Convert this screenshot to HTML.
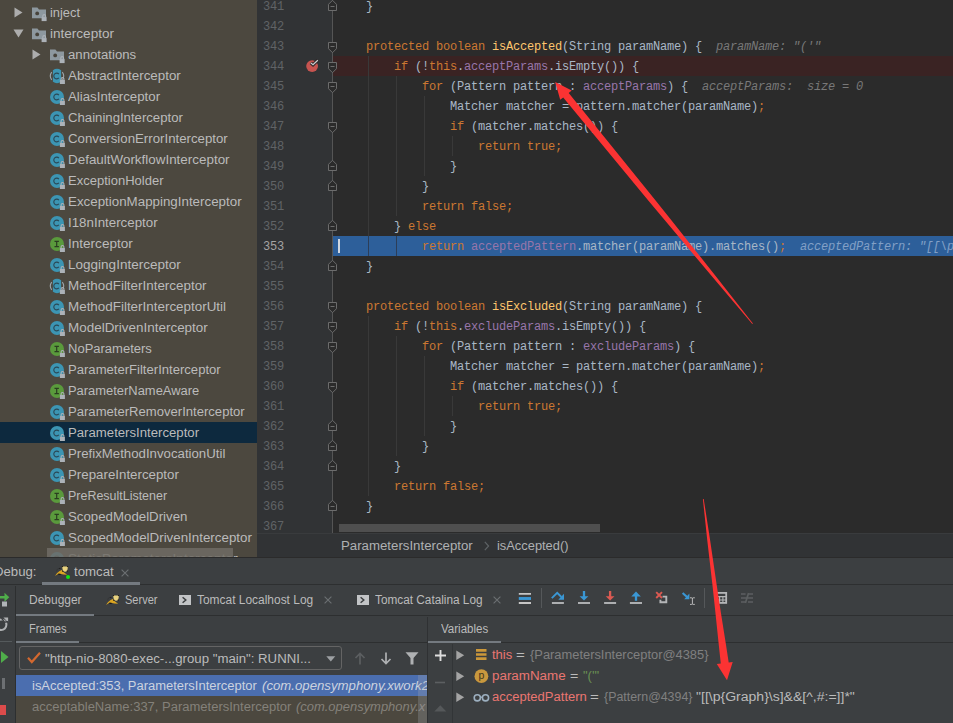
<!DOCTYPE html>
<html><head><meta charset="utf-8"><title>debug</title>
<style>
*{box-sizing:border-box}
html,body{margin:0;padding:0;background:#3c3f41;overflow:hidden}
body{width:953px;height:723px;position:relative;font-family:"Liberation Sans",sans-serif;font-size:12.5px;color:#bbbbbb}
.abs{position:absolute}
.t{position:absolute;white-space:pre;line-height:20px;height:20px;transform-origin:0 0}
#tree{position:absolute;left:0;top:0;width:257px;height:557px;background:#4c483f;overflow:hidden}
#tree .row{position:absolute;left:0;width:257px;height:21px}
#tree .sel{background:#0d293e}
#editor{position:absolute;left:257px;top:0;width:696px;height:533px;background:#2b2b2b;overflow:hidden}
#gutter{position:absolute;left:0;top:0;width:76px;height:533px;background:#313335}
.ln{position:absolute;left:6px;width:22px;font-family:"Liberation Mono",monospace;font-size:12px;letter-spacing:-0.2px;color:#606366;line-height:20px;height:20px;white-space:pre}
.code{position:absolute;left:81px;font-family:"Liberation Mono",monospace;font-size:12px;letter-spacing:-0.2012px;color:#a9b7c6;line-height:20px;height:20px;white-space:pre}
.k{color:#cc7832}.f{color:#9876aa}.m{color:#ffc66d}.h{color:#787878;font-style:italic}.h2{color:#82a0c6}
.lbg{position:absolute;left:76px;width:620px;height:20px}
#crumbs{position:absolute;left:257px;top:533px;width:696px;height:24px;background:#313335}
#debug{position:absolute;left:0;top:557px;width:953px;height:166px;background:#3c3f41;overflow:hidden}
.hl{position:absolute;background:#2d2f30;height:1px}
.vl{position:absolute;background:#2d2f30;width:1px}
.ul{position:absolute;background:#747a80;height:3px;z-index:2}
</style></head>
<body>
<div id="tree">
<div class="row" style="top:2px"></div>
<svg class="abs" style="left:14px;top:7px" width="10" height="11" viewBox="0 0 10 11"><path d="M0.5 0.5L8.5 5.5L0.5 10.5z" fill="#adadad"/></svg>
<svg class="abs" style="left:31px;top:3.7px" width="18" height="20" viewBox="0 0 18 20">
<path d="M1 3.5h5.4l1.6 2H15v8.7H1z" fill="#8d989f"/>
<circle cx="6.2" cy="9.4" r="1.9" fill="#47433b"/><rect x="10.6" y="13.100000000000001" width="5" height="4" fill="#acb2b8"/><path d="M11.799999999999999 13.2v-1.2a1.4 1.4 0 0 1 2.8 0v1.2" stroke="#acb2b8" stroke-width="1.1" fill="none"/></svg>
<span class="t" style="left:50.00px;top:2.50px;transform:scaleX(1.0293);">inject</span>
<div class="row" style="top:23px"></div>
<svg class="abs" style="left:13px;top:29px" width="12" height="10" viewBox="0 0 12 10"><path d="M0.5 0.5h10L5.5 8.5z" fill="#adadad"/></svg>
<svg class="abs" style="left:31px;top:24.7px" width="18" height="20" viewBox="0 0 18 20">
<path d="M1 3.5h5.4l1.6 2H15v8.7H1z" fill="#8d989f"/>
<circle cx="6.2" cy="9.4" r="1.9" fill="#47433b"/><rect x="10.6" y="13.100000000000001" width="5" height="4" fill="#acb2b8"/><path d="M11.799999999999999 13.2v-1.2a1.4 1.4 0 0 1 2.8 0v1.2" stroke="#acb2b8" stroke-width="1.1" fill="none"/></svg>
<span class="t" style="left:50.00px;top:23.50px;transform:scaleX(1.0833);">interceptor</span>
<div class="row" style="top:44px"></div>
<svg class="abs" style="left:32px;top:49px" width="10" height="11" viewBox="0 0 10 11"><path d="M0.5 0.5L8.5 5.5L0.5 10.5z" fill="#adadad"/></svg>
<svg class="abs" style="left:49px;top:45.7px" width="18" height="20" viewBox="0 0 18 20">
<path d="M1 3.5h5.4l1.6 2H15v8.7H1z" fill="#8d989f"/>
<circle cx="6.2" cy="9.4" r="1.9" fill="#47433b"/><rect x="10.6" y="13.100000000000001" width="5" height="4" fill="#acb2b8"/><path d="M11.799999999999999 13.2v-1.2a1.4 1.4 0 0 1 2.8 0v1.2" stroke="#acb2b8" stroke-width="1.1" fill="none"/></svg>
<span class="t" style="left:68.00px;top:44.50px;transform:scaleX(1.0545);">annotations</span>
<div class="row" style="top:65px"></div>
<svg class="abs" style="left:47px;top:65px" width="20" height="21" viewBox="-3 0 20 21"><path d="M2.9000000000000004 5.33A7 7 0 0 1 11.1 5.33L11.1 16.67A7 7 0 0 1 2.9000000000000004 16.67Z" fill="#3c95b3"/><path d="M1.7000000000000002 7.1A6.6 6.6 0 0 0 1.7000000000000002 14.9M12.3 7.1A6.6 6.6 0 0 1 12.3 14.9" stroke="#9aa4ab" stroke-width="1.1" fill="none"/><path d="M8.899999999999999 9.1A2.9 2.9 0 1 0 8.899999999999999 12.9" stroke="#2a4856" stroke-width="1.15" fill="none"/><rect x="9.9" y="15.0" width="5" height="4" fill="#acb2b8"/><path d="M11.1 15.100000000000001v-1.2a1.4 1.4 0 0 1 2.8 0v1.2" stroke="#acb2b8" stroke-width="1.1" fill="none"/></svg>
<span class="t" style="left:68.00px;top:65.50px;transform:scaleX(1.0679);">AbstractInterceptor</span>
<div class="row" style="top:86px"></div>
<svg class="abs" style="left:47px;top:86px" width="20" height="21" viewBox="-3 0 20 21"><circle cx="7.0" cy="11.0" r="7" fill="#3c95b3"/><path d="M8.899999999999999 9.1A2.9 2.9 0 1 0 8.899999999999999 12.9" stroke="#2a4856" stroke-width="1.15" fill="none"/><rect x="9.9" y="15.0" width="5" height="4" fill="#acb2b8"/><path d="M11.1 15.100000000000001v-1.2a1.4 1.4 0 0 1 2.8 0v1.2" stroke="#acb2b8" stroke-width="1.1" fill="none"/></svg>
<span class="t" style="left:68.00px;top:86.50px;transform:scaleX(1.0602);">AliasInterceptor</span>
<div class="row" style="top:107px"></div>
<svg class="abs" style="left:47px;top:107px" width="20" height="21" viewBox="-3 0 20 21"><circle cx="7.0" cy="11.0" r="7" fill="#3c95b3"/><path d="M8.899999999999999 9.1A2.9 2.9 0 1 0 8.899999999999999 12.9" stroke="#2a4856" stroke-width="1.15" fill="none"/><rect x="9.9" y="15.0" width="5" height="4" fill="#acb2b8"/><path d="M11.1 15.100000000000001v-1.2a1.4 1.4 0 0 1 2.8 0v1.2" stroke="#acb2b8" stroke-width="1.1" fill="none"/></svg>
<span class="t" style="left:68.00px;top:107.50px;transform:scaleX(1.0530);">ChainingInterceptor</span>
<div class="row" style="top:128px"></div>
<svg class="abs" style="left:47px;top:128px" width="20" height="21" viewBox="-3 0 20 21"><circle cx="7.0" cy="11.0" r="7" fill="#3c95b3"/><path d="M8.899999999999999 9.1A2.9 2.9 0 1 0 8.899999999999999 12.9" stroke="#2a4856" stroke-width="1.15" fill="none"/><rect x="9.9" y="15.0" width="5" height="4" fill="#acb2b8"/><path d="M11.1 15.100000000000001v-1.2a1.4 1.4 0 0 1 2.8 0v1.2" stroke="#acb2b8" stroke-width="1.1" fill="none"/></svg>
<span class="t" style="left:68.00px;top:128.50px;transform:scaleX(1.0598);">ConversionErrorInterceptor</span>
<div class="row" style="top:149px"></div>
<svg class="abs" style="left:47px;top:149px" width="20" height="21" viewBox="-3 0 20 21"><circle cx="7.0" cy="11.0" r="7" fill="#3c95b3"/><path d="M8.899999999999999 9.1A2.9 2.9 0 1 0 8.899999999999999 12.9" stroke="#2a4856" stroke-width="1.15" fill="none"/><rect x="9.9" y="15.0" width="5" height="4" fill="#acb2b8"/><path d="M11.1 15.100000000000001v-1.2a1.4 1.4 0 0 1 2.8 0v1.2" stroke="#acb2b8" stroke-width="1.1" fill="none"/></svg>
<span class="t" style="left:68.00px;top:149.50px;transform:scaleX(1.0734);">DefaultWorkflowInterceptor</span>
<div class="row" style="top:170px"></div>
<svg class="abs" style="left:47px;top:170px" width="20" height="21" viewBox="-3 0 20 21"><circle cx="7.0" cy="11.0" r="7" fill="#3c95b3"/><path d="M8.899999999999999 9.1A2.9 2.9 0 1 0 8.899999999999999 12.9" stroke="#2a4856" stroke-width="1.15" fill="none"/><rect x="9.9" y="15.0" width="5" height="4" fill="#acb2b8"/><path d="M11.1 15.100000000000001v-1.2a1.4 1.4 0 0 1 2.8 0v1.2" stroke="#acb2b8" stroke-width="1.1" fill="none"/></svg>
<span class="t" style="left:68.00px;top:170.50px;transform:scaleX(1.0420);">ExceptionHolder</span>
<div class="row" style="top:191px"></div>
<svg class="abs" style="left:47px;top:191px" width="20" height="21" viewBox="-3 0 20 21"><circle cx="7.0" cy="11.0" r="7" fill="#3c95b3"/><path d="M8.899999999999999 9.1A2.9 2.9 0 1 0 8.899999999999999 12.9" stroke="#2a4856" stroke-width="1.15" fill="none"/><rect x="9.9" y="15.0" width="5" height="4" fill="#acb2b8"/><path d="M11.1 15.100000000000001v-1.2a1.4 1.4 0 0 1 2.8 0v1.2" stroke="#acb2b8" stroke-width="1.1" fill="none"/></svg>
<span class="t" style="left:68.00px;top:191.50px;transform:scaleX(1.0675);">ExceptionMappingInterceptor</span>
<div class="row" style="top:212px"></div>
<svg class="abs" style="left:47px;top:212px" width="20" height="21" viewBox="-3 0 20 21"><circle cx="7.0" cy="11.0" r="7" fill="#3c95b3"/><path d="M8.899999999999999 9.1A2.9 2.9 0 1 0 8.899999999999999 12.9" stroke="#2a4856" stroke-width="1.15" fill="none"/><rect x="9.9" y="15.0" width="5" height="4" fill="#acb2b8"/><path d="M11.1 15.100000000000001v-1.2a1.4 1.4 0 0 1 2.8 0v1.2" stroke="#acb2b8" stroke-width="1.1" fill="none"/></svg>
<span class="t" style="left:68.00px;top:212.50px;transform:scaleX(1.0665);">I18nInterceptor</span>
<div class="row" style="top:233px"></div>
<svg class="abs" style="left:47px;top:233px" width="20" height="21" viewBox="-3 0 20 21"><circle cx="7.0" cy="11.0" r="7" fill="#5a9a3c"/><path d="M4.5 8.3h4.4M6.7 8.3v5.4M4.5 13.7h4.4" stroke="#2b3d20" stroke-width="1.2" fill="none"/><rect x="9.9" y="15.0" width="5" height="4" fill="#acb2b8"/><path d="M11.1 15.100000000000001v-1.2a1.4 1.4 0 0 1 2.8 0v1.2" stroke="#acb2b8" stroke-width="1.1" fill="none"/></svg>
<span class="t" style="left:68.00px;top:233.50px;transform:scaleX(1.0841);">Interceptor</span>
<div class="row" style="top:254px"></div>
<svg class="abs" style="left:47px;top:254px" width="20" height="21" viewBox="-3 0 20 21"><circle cx="7.0" cy="11.0" r="7" fill="#3c95b3"/><path d="M8.899999999999999 9.1A2.9 2.9 0 1 0 8.899999999999999 12.9" stroke="#2a4856" stroke-width="1.15" fill="none"/><rect x="9.9" y="15.0" width="5" height="4" fill="#acb2b8"/><path d="M11.1 15.100000000000001v-1.2a1.4 1.4 0 0 1 2.8 0v1.2" stroke="#acb2b8" stroke-width="1.1" fill="none"/></svg>
<span class="t" style="left:68.00px;top:254.50px;transform:scaleX(1.0819);">LoggingInterceptor</span>
<div class="row" style="top:275px"></div>
<svg class="abs" style="left:47px;top:275px" width="20" height="21" viewBox="-3 0 20 21"><path d="M2.9000000000000004 5.33A7 7 0 0 1 11.1 5.33L11.1 16.67A7 7 0 0 1 2.9000000000000004 16.67Z" fill="#3c95b3"/><path d="M1.7000000000000002 7.1A6.6 6.6 0 0 0 1.7000000000000002 14.9M12.3 7.1A6.6 6.6 0 0 1 12.3 14.9" stroke="#9aa4ab" stroke-width="1.1" fill="none"/><path d="M8.899999999999999 9.1A2.9 2.9 0 1 0 8.899999999999999 12.9" stroke="#2a4856" stroke-width="1.15" fill="none"/><rect x="9.9" y="15.0" width="5" height="4" fill="#acb2b8"/><path d="M11.1 15.100000000000001v-1.2a1.4 1.4 0 0 1 2.8 0v1.2" stroke="#acb2b8" stroke-width="1.1" fill="none"/></svg>
<span class="t" style="left:68.00px;top:275.50px;transform:scaleX(1.0724);">MethodFilterInterceptor</span>
<div class="row" style="top:296px"></div>
<svg class="abs" style="left:47px;top:296px" width="20" height="21" viewBox="-3 0 20 21"><circle cx="7.0" cy="11.0" r="7" fill="#3c95b3"/><path d="M8.899999999999999 9.1A2.9 2.9 0 1 0 8.899999999999999 12.9" stroke="#2a4856" stroke-width="1.15" fill="none"/><rect x="9.9" y="15.0" width="5" height="4" fill="#acb2b8"/><path d="M11.1 15.100000000000001v-1.2a1.4 1.4 0 0 1 2.8 0v1.2" stroke="#acb2b8" stroke-width="1.1" fill="none"/></svg>
<span class="t" style="left:68.00px;top:296.50px;transform:scaleX(1.0730);">MethodFilterInterceptorUtil</span>
<div class="row" style="top:317px"></div>
<svg class="abs" style="left:47px;top:317px" width="20" height="21" viewBox="-3 0 20 21"><circle cx="7.0" cy="11.0" r="7" fill="#3c95b3"/><path d="M8.899999999999999 9.1A2.9 2.9 0 1 0 8.899999999999999 12.9" stroke="#2a4856" stroke-width="1.15" fill="none"/><rect x="9.9" y="15.0" width="5" height="4" fill="#acb2b8"/><path d="M11.1 15.100000000000001v-1.2a1.4 1.4 0 0 1 2.8 0v1.2" stroke="#acb2b8" stroke-width="1.1" fill="none"/></svg>
<span class="t" style="left:68.00px;top:317.50px;transform:scaleX(1.0759);">ModelDrivenInterceptor</span>
<div class="row" style="top:338px"></div>
<svg class="abs" style="left:47px;top:338px" width="20" height="21" viewBox="-3 0 20 21"><circle cx="7.0" cy="11.0" r="7" fill="#5a9a3c"/><path d="M4.5 8.3h4.4M6.7 8.3v5.4M4.5 13.7h4.4" stroke="#2b3d20" stroke-width="1.2" fill="none"/><rect x="9.9" y="15.0" width="5" height="4" fill="#acb2b8"/><path d="M11.1 15.100000000000001v-1.2a1.4 1.4 0 0 1 2.8 0v1.2" stroke="#acb2b8" stroke-width="1.1" fill="none"/></svg>
<span class="t" style="left:68.00px;top:338.50px;transform:scaleX(1.0406);">NoParameters</span>
<div class="row" style="top:359px"></div>
<svg class="abs" style="left:47px;top:359px" width="20" height="21" viewBox="-3 0 20 21"><circle cx="7.0" cy="11.0" r="7" fill="#3c95b3"/><path d="M8.899999999999999 9.1A2.9 2.9 0 1 0 8.899999999999999 12.9" stroke="#2a4856" stroke-width="1.15" fill="none"/><rect x="9.9" y="15.0" width="5" height="4" fill="#acb2b8"/><path d="M11.1 15.100000000000001v-1.2a1.4 1.4 0 0 1 2.8 0v1.2" stroke="#acb2b8" stroke-width="1.1" fill="none"/></svg>
<span class="t" style="left:68.00px;top:359.50px;transform:scaleX(1.0465);">ParameterFilterInterceptor</span>
<div class="row" style="top:380px"></div>
<svg class="abs" style="left:47px;top:380px" width="20" height="21" viewBox="-3 0 20 21"><circle cx="7.0" cy="11.0" r="7" fill="#5a9a3c"/><path d="M4.5 8.3h4.4M6.7 8.3v5.4M4.5 13.7h4.4" stroke="#2b3d20" stroke-width="1.2" fill="none"/><rect x="9.9" y="15.0" width="5" height="4" fill="#acb2b8"/><path d="M11.1 15.100000000000001v-1.2a1.4 1.4 0 0 1 2.8 0v1.2" stroke="#acb2b8" stroke-width="1.1" fill="none"/></svg>
<span class="t" style="left:68.00px;top:380.50px;transform:scaleX(1.0341);">ParameterNameAware</span>
<div class="row" style="top:401px"></div>
<svg class="abs" style="left:47px;top:401px" width="20" height="21" viewBox="-3 0 20 21"><circle cx="7.0" cy="11.0" r="7" fill="#3c95b3"/><path d="M8.899999999999999 9.1A2.9 2.9 0 1 0 8.899999999999999 12.9" stroke="#2a4856" stroke-width="1.15" fill="none"/><rect x="9.9" y="15.0" width="5" height="4" fill="#acb2b8"/><path d="M11.1 15.100000000000001v-1.2a1.4 1.4 0 0 1 2.8 0v1.2" stroke="#acb2b8" stroke-width="1.1" fill="none"/></svg>
<span class="t" style="left:68.00px;top:401.50px;transform:scaleX(1.0465);">ParameterRemoverInterceptor</span>
<div class="row sel" style="top:422px"></div>
<svg class="abs" style="left:47px;top:422px" width="20" height="21" viewBox="-3 0 20 21"><circle cx="7.0" cy="11.0" r="7" fill="#3c95b3"/><path d="M8.899999999999999 9.1A2.9 2.9 0 1 0 8.899999999999999 12.9" stroke="#2a4856" stroke-width="1.15" fill="none"/><rect x="9.9" y="15.0" width="5" height="4" fill="#acb2b8"/><path d="M11.1 15.100000000000001v-1.2a1.4 1.4 0 0 1 2.8 0v1.2" stroke="#acb2b8" stroke-width="1.1" fill="none"/></svg>
<span class="t" style="left:68.00px;top:422.50px;transform:scaleX(1.0540);">ParametersInterceptor</span>
<div class="row" style="top:443px"></div>
<svg class="abs" style="left:47px;top:443px" width="20" height="21" viewBox="-3 0 20 21"><circle cx="7.0" cy="11.0" r="7" fill="#3c95b3"/><path d="M8.899999999999999 9.1A2.9 2.9 0 1 0 8.899999999999999 12.9" stroke="#2a4856" stroke-width="1.15" fill="none"/><rect x="9.9" y="15.0" width="5" height="4" fill="#acb2b8"/><path d="M11.1 15.100000000000001v-1.2a1.4 1.4 0 0 1 2.8 0v1.2" stroke="#acb2b8" stroke-width="1.1" fill="none"/></svg>
<span class="t" style="left:68.00px;top:443.50px;transform:scaleX(1.0581);">PrefixMethodInvocationUtil</span>
<div class="row" style="top:464px"></div>
<svg class="abs" style="left:47px;top:464px" width="20" height="21" viewBox="-3 0 20 21"><circle cx="7.0" cy="11.0" r="7" fill="#3c95b3"/><path d="M8.899999999999999 9.1A2.9 2.9 0 1 0 8.899999999999999 12.9" stroke="#2a4856" stroke-width="1.15" fill="none"/><rect x="9.9" y="15.0" width="5" height="4" fill="#acb2b8"/><path d="M11.1 15.100000000000001v-1.2a1.4 1.4 0 0 1 2.8 0v1.2" stroke="#acb2b8" stroke-width="1.1" fill="none"/></svg>
<span class="t" style="left:68.00px;top:464.50px;transform:scaleX(1.0638);">PrepareInterceptor</span>
<div class="row" style="top:485px"></div>
<svg class="abs" style="left:47px;top:485px" width="20" height="21" viewBox="-3 0 20 21"><circle cx="7.0" cy="11.0" r="7" fill="#5a9a3c"/><path d="M4.5 8.3h4.4M6.7 8.3v5.4M4.5 13.7h4.4" stroke="#2b3d20" stroke-width="1.2" fill="none"/><rect x="9.9" y="15.0" width="5" height="4" fill="#acb2b8"/><path d="M11.1 15.100000000000001v-1.2a1.4 1.4 0 0 1 2.8 0v1.2" stroke="#acb2b8" stroke-width="1.1" fill="none"/></svg>
<span class="t" style="left:68.00px;top:485.50px;transform:scaleX(0.9971);">PreResultListener</span>
<div class="row" style="top:506px"></div>
<svg class="abs" style="left:47px;top:506px" width="20" height="21" viewBox="-3 0 20 21"><circle cx="7.0" cy="11.0" r="7" fill="#5a9a3c"/><path d="M4.5 8.3h4.4M6.7 8.3v5.4M4.5 13.7h4.4" stroke="#2b3d20" stroke-width="1.2" fill="none"/><rect x="9.9" y="15.0" width="5" height="4" fill="#acb2b8"/><path d="M11.1 15.100000000000001v-1.2a1.4 1.4 0 0 1 2.8 0v1.2" stroke="#acb2b8" stroke-width="1.1" fill="none"/></svg>
<span class="t" style="left:68.00px;top:506.50px;transform:scaleX(1.0609);">ScopedModelDriven</span>
<div class="row" style="top:527px"></div>
<svg class="abs" style="left:47px;top:527px" width="20" height="21" viewBox="-3 0 20 21"><circle cx="7.0" cy="11.0" r="7" fill="#3c95b3"/><path d="M8.899999999999999 9.1A2.9 2.9 0 1 0 8.899999999999999 12.9" stroke="#2a4856" stroke-width="1.15" fill="none"/><rect x="9.9" y="15.0" width="5" height="4" fill="#acb2b8"/><path d="M11.1 15.100000000000001v-1.2a1.4 1.4 0 0 1 2.8 0v1.2" stroke="#acb2b8" stroke-width="1.1" fill="none"/></svg>
<span class="t" style="left:68.00px;top:527.50px;transform:scaleX(1.0671);">ScopedModelDrivenInterceptor</span>
<div class="row" style="top:548px"></div>
<svg class="abs" style="left:47px;top:548px" width="20" height="21" viewBox="-3 0 20 21"><circle cx="7.0" cy="11.0" r="7" fill="#3c95b3"/><path d="M8.899999999999999 9.1A2.9 2.9 0 1 0 8.899999999999999 12.9" stroke="#2a4856" stroke-width="1.15" fill="none"/><rect x="9.9" y="15.0" width="5" height="4" fill="#acb2b8"/><path d="M11.1 15.100000000000001v-1.2a1.4 1.4 0 0 1 2.8 0v1.2" stroke="#acb2b8" stroke-width="1.1" fill="none"/></svg>
<span class="t" style="left:68.00px;top:548.50px;transform:scaleX(1.0903);">StaticParametersInterceptor</span>
<div class="abs" style="left:47px;top:548px;width:186px;height:9px;background:rgba(112,108,101,0.85)"></div>
</div>
<div id="editor">
<div id="gutter"></div>
<div class="lbg" style="top:56px;background:#3a2323"></div>
<div class="lbg" style="top:236px;background:#2d5f9a"></div>
<div class="abs" style="left:75px;top:0;width:1px;height:533px;background:#555555"></div>
<div class="abs" style="left:111px;top:56px;width:1px;height:180px;background:#393939"></div>
<div class="abs" style="left:111px;top:316px;width:1px;height:180px;background:#393939"></div>
<div class="abs" style="left:139px;top:76px;width:1px;height:140px;background:#393939"></div>
<div class="abs" style="left:139px;top:336px;width:1px;height:120px;background:#393939"></div>
<div class="abs" style="left:167px;top:96px;width:1px;height:80px;background:#393939"></div>
<div class="abs" style="left:167px;top:356px;width:1px;height:80px;background:#393939"></div>
<div class="abs" style="left:195px;top:136px;width:1px;height:20px;background:#393939"></div>
<div class="abs" style="left:195px;top:396px;width:1px;height:20px;background:#393939"></div>
<div class="abs" style="left:111px;top:236px;width:1px;height:20px;background:#2c3e58"></div>
<div class="abs" style="left:139px;top:236px;width:1px;height:20px;background:#2c3e58"></div>
<div class="abs" style="left:81px;top:239px;width:2px;height:14px;background:#d0d7e0"></div>
<span class="ln" style="top:-3px">341</span>
<span class="code" style="top:-3px">    }</span>
<span class="ln" style="top:17px">342</span>
<span class="ln" style="top:37px">343</span>
<span class="code" style="top:37px">    <span class="k">protected boolean </span><span class="m">isAccepted</span>(String paramName) {<span class="h">  paramName: "('"</span></span>
<span class="ln" style="top:57px">344</span>
<span class="code" style="top:57px">        <span class="k">if </span>(!<span class="k">this</span>.<span class="f">acceptParams</span>.isEmpty()) {</span>
<span class="ln" style="top:77px">345</span>
<span class="code" style="top:77px">            <span class="k">for </span>(Pattern pattern : <span class="f">acceptParams</span>) {<span class="h">  acceptParams:  size = 0</span></span>
<span class="ln" style="top:97px">346</span>
<span class="code" style="top:97px">                Matcher matcher = pattern.matcher(paramName)<span class="k">;</span></span>
<span class="ln" style="top:117px">347</span>
<span class="code" style="top:117px">                <span class="k">if </span>(matcher.matches()) {</span>
<span class="ln" style="top:137px">348</span>
<span class="code" style="top:137px">                    <span class="k">return true;</span></span>
<span class="ln" style="top:157px">349</span>
<span class="code" style="top:157px">                }</span>
<span class="ln" style="top:177px">350</span>
<span class="code" style="top:177px">            }</span>
<span class="ln" style="top:197px">351</span>
<span class="code" style="top:197px">            <span class="k">return false;</span></span>
<span class="ln" style="top:217px">352</span>
<span class="code" style="top:217px">        } <span class="k">else</span></span>
<span class="ln" style="color:#a4a3a3;top:237px">353</span>
<span class="code" style="top:237px">            <span class="k">return </span><span class="f">acceptedPattern</span>.matcher(paramName).matches()<span class="k">;</span><span class="h h2">  acceptedPattern: "[[\p{Graph}\s]&amp;&amp;[^,#:=]]*"</span></span>
<span class="ln" style="top:257px">354</span>
<span class="code" style="top:257px">    }</span>
<span class="ln" style="top:277px">355</span>
<span class="ln" style="top:297px">356</span>
<span class="code" style="top:297px">    <span class="k">protected boolean </span><span class="m">isExcluded</span>(String paramName) {</span>
<span class="ln" style="top:317px">357</span>
<span class="code" style="top:317px">        <span class="k">if </span>(!<span class="k">this</span>.<span class="f">excludeParams</span>.isEmpty()) {</span>
<span class="ln" style="top:337px">358</span>
<span class="code" style="top:337px">            <span class="k">for </span>(Pattern pattern : <span class="f">excludeParams</span>) {</span>
<span class="ln" style="top:357px">359</span>
<span class="code" style="top:357px">                Matcher matcher = pattern.matcher(paramName)<span class="k">;</span></span>
<span class="ln" style="top:377px">360</span>
<span class="code" style="top:377px">                <span class="k">if </span>(matcher.matches()) {</span>
<span class="ln" style="top:397px">361</span>
<span class="code" style="top:397px">                    <span class="k">return true;</span></span>
<span class="ln" style="top:417px">362</span>
<span class="code" style="top:417px">                }</span>
<span class="ln" style="top:437px">363</span>
<span class="code" style="top:437px">            }</span>
<span class="ln" style="top:457px">364</span>
<span class="code" style="top:457px">        }</span>
<span class="ln" style="top:477px">365</span>
<span class="code" style="top:477px">        <span class="k">return false;</span></span>
<span class="ln" style="top:497px">366</span>
<span class="code" style="top:497px">    }</span>
<span class="ln" style="top:517px">367</span>
<svg class="abs" style="left:70px;top:42px" width="11" height="12" viewBox="0 0 11 12"><path d="M1.5 0.5h8v6.2l-4 4l-4-4z" fill="#2b2b2b" stroke="#6c6c6c"/><path d="M3.5 4.5h4" stroke="#6c6c6c"/></svg>
<svg class="abs" style="left:70px;top:62px" width="11" height="12" viewBox="0 0 11 12"><path d="M1.5 0.5h8v6.2l-4 4l-4-4z" fill="#2b2b2b" stroke="#6c6c6c"/><path d="M3.5 4.5h4" stroke="#6c6c6c"/></svg>
<svg class="abs" style="left:70px;top:82px" width="11" height="12" viewBox="0 0 11 12"><path d="M1.5 0.5h8v6.2l-4 4l-4-4z" fill="#2b2b2b" stroke="#6c6c6c"/><path d="M3.5 4.5h4" stroke="#6c6c6c"/></svg>
<svg class="abs" style="left:70px;top:122px" width="11" height="12" viewBox="0 0 11 12"><path d="M1.5 0.5h8v6.2l-4 4l-4-4z" fill="#2b2b2b" stroke="#6c6c6c"/><path d="M3.5 4.5h4" stroke="#6c6c6c"/></svg>
<svg class="abs" style="left:70px;top:302px" width="11" height="12" viewBox="0 0 11 12"><path d="M1.5 0.5h8v6.2l-4 4l-4-4z" fill="#2b2b2b" stroke="#6c6c6c"/><path d="M3.5 4.5h4" stroke="#6c6c6c"/></svg>
<svg class="abs" style="left:70px;top:322px" width="11" height="12" viewBox="0 0 11 12"><path d="M1.5 0.5h8v6.2l-4 4l-4-4z" fill="#2b2b2b" stroke="#6c6c6c"/><path d="M3.5 4.5h4" stroke="#6c6c6c"/></svg>
<svg class="abs" style="left:70px;top:342px" width="11" height="12" viewBox="0 0 11 12"><path d="M1.5 0.5h8v6.2l-4 4l-4-4z" fill="#2b2b2b" stroke="#6c6c6c"/><path d="M3.5 4.5h4" stroke="#6c6c6c"/></svg>
<svg class="abs" style="left:70px;top:382px" width="11" height="12" viewBox="0 0 11 12"><path d="M1.5 0.5h8v6.2l-4 4l-4-4z" fill="#2b2b2b" stroke="#6c6c6c"/><path d="M3.5 4.5h4" stroke="#6c6c6c"/></svg>
<svg class="abs" style="left:70px;top:0px" width="11" height="12" viewBox="0 0 11 12"><path d="M1.5 10.5h8v-6.2l-4-4l-4 4z" fill="#2b2b2b" stroke="#6c6c6c"/><path d="M3.5 6.5h4" stroke="#6c6c6c"/></svg>
<svg class="abs" style="left:70px;top:160px" width="11" height="12" viewBox="0 0 11 12"><path d="M1.5 10.5h8v-6.2l-4-4l-4 4z" fill="#2b2b2b" stroke="#6c6c6c"/><path d="M3.5 6.5h4" stroke="#6c6c6c"/></svg>
<svg class="abs" style="left:70px;top:180px" width="11" height="12" viewBox="0 0 11 12"><path d="M1.5 10.5h8v-6.2l-4-4l-4 4z" fill="#2b2b2b" stroke="#6c6c6c"/><path d="M3.5 6.5h4" stroke="#6c6c6c"/></svg>
<svg class="abs" style="left:70px;top:220px" width="11" height="12" viewBox="0 0 11 12"><path d="M1.5 10.5h8v-6.2l-4-4l-4 4z" fill="#2b2b2b" stroke="#6c6c6c"/><path d="M3.5 6.5h4" stroke="#6c6c6c"/></svg>
<svg class="abs" style="left:70px;top:260px" width="11" height="12" viewBox="0 0 11 12"><path d="M1.5 10.5h8v-6.2l-4-4l-4 4z" fill="#2b2b2b" stroke="#6c6c6c"/><path d="M3.5 6.5h4" stroke="#6c6c6c"/></svg>
<svg class="abs" style="left:70px;top:420px" width="11" height="12" viewBox="0 0 11 12"><path d="M1.5 10.5h8v-6.2l-4-4l-4 4z" fill="#2b2b2b" stroke="#6c6c6c"/><path d="M3.5 6.5h4" stroke="#6c6c6c"/></svg>
<svg class="abs" style="left:70px;top:440px" width="11" height="12" viewBox="0 0 11 12"><path d="M1.5 10.5h8v-6.2l-4-4l-4 4z" fill="#2b2b2b" stroke="#6c6c6c"/><path d="M3.5 6.5h4" stroke="#6c6c6c"/></svg>
<svg class="abs" style="left:70px;top:460px" width="11" height="12" viewBox="0 0 11 12"><path d="M1.5 10.5h8v-6.2l-4-4l-4 4z" fill="#2b2b2b" stroke="#6c6c6c"/><path d="M3.5 6.5h4" stroke="#6c6c6c"/></svg>
<svg class="abs" style="left:70px;top:500px" width="11" height="12" viewBox="0 0 11 12"><path d="M1.5 10.5h8v-6.2l-4-4l-4 4z" fill="#2b2b2b" stroke="#6c6c6c"/><path d="M3.5 6.5h4" stroke="#6c6c6c"/></svg>
<svg class="abs" style="left:48px;top:58px" width="16" height="16" viewBox="0 0 16 16"><circle cx="7.1" cy="8.1" r="5.9" fill="#c75450"/><path d="M5.8 4.9l2.2 1.9l4.8-4.6" stroke="#2f2627" stroke-width="3.2" fill="none"/><path d="M5.8 4.9l2.2 1.9l4.8-4.6" stroke="#cfd2d4" stroke-width="1.2" fill="none"/></svg>
<div class="abs" style="left:82px;top:524px;width:261px;height:8px;background:#4f4f4f"></div>
</div>
<div id="crumbs">
<div class="abs" style="left:0;top:0;width:696px;height:1px;background:#393b3d"></div>
<span class="t" style="left:84.24px;top:3.00px;transform:scaleX(1.0593);color:#afb1b3;">ParametersInterceptor</span>
<svg class="abs" style="left:227px;top:8px" width="6" height="10" viewBox="0 0 6 10"><path d="M0.8 0.8L4.6 5L0.8 9.2" stroke="#5e6366" stroke-width="1.2" fill="none"/></svg>
<span class="t" style="left:239.66px;top:3.00px;transform:scaleX(1.0290);color:#afb1b3;">isAccepted()</span>
</div>
<div id="debug">
<div class="hl" style="left:0;top:0;width:953px;height:1px;background:#2b2b2b"></div>
<span class="t" style="left:-6.25px;top:4.50px;transform:scaleX(1.0547);">Debug:</span>
<svg class="abs" style="left:55px;top:8px" width="15" height="13" viewBox="0 0 15 13"><path d="M7 1.6L13 1.6L12.2 6Q10 7.3 8 6Z" fill="#e8d27e"/>
<path d="M6.8 1h1.5l-1 1.5zM13.2 1h-1.5l1 1.5z" fill="#15130c"/>
<path d="M0.2 10.9Q1.5 7.5 6.6 5L8 6.8Q10 8.2 12.2 9.7Q8 9.7 5 8.7Q2.5 8.6 0.2 10.9Z" fill="#dba521"/>
<path d="M3.3 8.5l2.5 0.6l-0.4 1l-2.3-0.7zM7.2 5.7h1.3v1.1h-1.3zM11.7 5.5h1.2v1.1h-1.2zM3.9 2.9h1.5v0.9h-1.5z" fill="#17150f"/>
<path d="M4.6 3.2Q1.6 3.4 1.6 6.4" stroke="#2f3133" stroke-width="0.6" fill="none"/></svg>
<div class="abs" style="left:65.9px;top:17.9px;width:4.4px;height:4.4px;border-radius:3px;background:#10e610"></div>
<span class="t" style="left:74.10px;top:4.50px;transform:scaleX(1.0593);">tomcat</span>
<svg class="abs" style="left:121.2px;top:11.5px" width="8" height="8" viewBox="0 0 8 8"><path d="M0.6 0.6l6.8 6.8M7.4 0.6l-6.8 6.8" stroke="#6c7073" stroke-width="1.1"/></svg>
<div class="ul" style="left:42px;top:25px;width:98px"></div>
<div class="hl" style="left:0;top:27px;width:953px"></div>
<div class="vl" style="left:15px;top:29px;height:140px"></div>
<svg class="abs" style="left:-8px;top:34px" width="18" height="17" viewBox="0 0 18 17"><path d="M8 5h4.5V1.8l4.8 4.5l-4.8 4.5V7.6H8z" fill="#4fae4a"/><rect x="10" y="10.5" width="5" height="5" fill="#b0b4b8"/></svg>
<svg class="abs" style="left:-8px;top:60px" width="18" height="16" viewBox="0 0 18 16"><circle cx="9.2" cy="7.8" r="5.2" stroke="#afb1b3" stroke-width="2" fill="none"/><path d="M11.5 0.6h4.6v5z" fill="#afb1b3"/><path d="M9.5 1l3 4.2l3.6-0.6" stroke="#3c3f41" stroke-width="1.3" fill="none"/></svg>
<div class="hl" style="left:0;top:84px;width:12px;background:#555a5c"></div>
<svg class="abs" style="left:0px;top:93px" width="10" height="14" viewBox="0 0 10 14"><path d="M1 1L8.5 7L1 13z" fill="#4fae4a"/></svg>
<div class="abs" style="left:2px;top:121px;width:3px;height:11px;background:#6d7073"></div>
<div class="abs" style="left:0;top:148px;width:6px;height:10px;background:#db4b4b"></div>
<span class="t" style="left:28.54px;top:33.00px;transform:scaleX(0.9583);">Debugger</span>
<svg class="abs" style="left:106.3px;top:36.700000000000045px" width="15" height="13" viewBox="0 0 15 13"><path d="M7 1.6L13 1.6L12.2 6Q10 7.3 8 6Z" fill="#e8d27e"/>
<path d="M6.8 1h1.5l-1 1.5zM13.2 1h-1.5l1 1.5z" fill="#15130c"/>
<path d="M0.2 10.9Q1.5 7.5 6.6 5L8 6.8Q10 8.2 12.2 9.7Q8 9.7 5 8.7Q2.5 8.6 0.2 10.9Z" fill="#dba521"/>
<path d="M3.3 8.5l2.5 0.6l-0.4 1l-2.3-0.7zM7.2 5.7h1.3v1.1h-1.3zM11.7 5.5h1.2v1.1h-1.2zM3.9 2.9h1.5v0.9h-1.5z" fill="#17150f"/>
<path d="M4.6 3.2Q1.6 3.4 1.6 6.4" stroke="#2f3133" stroke-width="0.6" fill="none"/></svg>
<span class="t" style="left:124.60px;top:33.00px;transform:scaleX(0.8839);">Server</span>
<svg class="abs" style="left:179px;top:38px" width="12" height="10" viewBox="0 0 12 10"><rect x="0" y="0" width="12" height="10" fill="#c2c4c6"/><path d="M3.6 2.2l3.2 2.8l-3.2 2.8" stroke="#3c3f41" stroke-width="1.5" fill="none"/></svg>
<span class="t" style="left:197.36px;top:33.00px;transform:scaleX(0.9553);">Tomcat Localhost Log</span>
<svg class="abs" style="left:324px;top:39px" width="8" height="8" viewBox="0 0 8 8"><path d="M0.6 0.6l6.8 6.8M7.4 0.6l-6.8 6.8" stroke="#6c7073" stroke-width="1.1"/></svg>
<svg class="abs" style="left:357px;top:38px" width="12" height="10" viewBox="0 0 12 10"><rect x="0" y="0" width="12" height="10" fill="#c2c4c6"/><path d="M3.6 2.2l3.2 2.8l-3.2 2.8" stroke="#3c3f41" stroke-width="1.5" fill="none"/></svg>
<span class="t" style="left:374.86px;top:33.00px;transform:scaleX(0.9439);">Tomcat Catalina Log</span>
<svg class="abs" style="left:493.3px;top:39px" width="8" height="8" viewBox="0 0 8 8"><path d="M0.6 0.6l6.8 6.8M7.4 0.6l-6.8 6.8" stroke="#6c7073" stroke-width="1.1"/></svg>
<div class="ul" style="left:16px;top:57px;width:78px;height:2px"></div>
<div class="hl" style="left:16px;top:58px;width:937px"></div>
<svg class="abs" style="left:0;top:0" width="953" height="166" viewBox="0 557 953 166"><path d="M518.8 593.9h12.2M518.8 603h12.2" stroke="#c6c6c6" stroke-width="1.9"/><path d="M518.8 598.5h12.2" stroke="#3a97d4" stroke-width="2.9"/><path d="M541.5 588v20M704.5 588v20" stroke="#55585a" stroke-width="1"/><path d="M551.8 598.2L557.2 592.8L561.4 597" stroke="#3a97d4" stroke-width="1.9" fill="none"/><path d="M558.3 599.7h5.7v-5.9z" fill="#3a97d4"/><path d="M551.9 603h12" stroke="#b4b6b8" stroke-width="1.9"/><path d="M584 591v6" stroke="#3a97d4" stroke-width="2.3"/><path d="M579.6 596.2h8.8L584 600.5z" fill="#3a97d4"/><path d="M578 603h12" stroke="#b4b6b8" stroke-width="1.9"/><path d="M610.1 591v6" stroke="#db5a52" stroke-width="2.3"/><path d="M605.7 596.2h8.8L610.1 600.5z" fill="#db5a52"/><path d="M604.1 603h12" stroke="#b4b6b8" stroke-width="1.9"/><path d="M636 595.5v5.3" stroke="#3a97d4" stroke-width="2.3"/><path d="M631.3 596.4h9.5L636 591.5z" fill="#3a97d4"/><path d="M629.9 603h12.1" stroke="#b4b6b8" stroke-width="1.9"/><path d="M656.2 592.2l5.8 5.8M662 592.2l-5.8 5.8" stroke="#db5a52" stroke-width="1.9"/><path d="M662.6 596.6h3.7v5.6h-5.9v-2.4" stroke="#b4b6b8" stroke-width="1.9" fill="none"/><path d="M682.6 593l5 4.6" stroke="#3a97d4" stroke-width="2.1"/><path d="M684.2 599.2h5.2v-5.6z" fill="#3a97d4"/><path d="M690 597.8h1.6q0.8 0 0.8 0.8v5q0 0.8 -0.8 0.8h-1.6M694.8 597.8h-1.6q-0.8 0 -0.8 0.8M694.8 604.4h-1.6q-0.8 0 -0.8 -0.8" stroke="#c8c8c8" stroke-width="0.9" fill="none"/><rect x="716" y="592.9" width="10.2" height="10" fill="none" stroke="#b4b6b8" stroke-width="1.8"/><path d="M716 596.6h10M719.6 596.6v6.4M722.9 596.6v6.4M716 600h10" stroke="#b4b6b8" stroke-width="1.1"/><path d="M741 594h4.6M748 594h5M741 598h12M741 602h4.6M748 602h5M748.6 593l-3.2 10" stroke="#5c5f61" stroke-width="1.7" fill="none"/></svg>
<span class="t" style="left:28.61px;top:62.30px;transform:scaleX(0.8869);">Frames</span>
<div class="ul" style="left:16px;top:84px;width:63px;height:2px"></div>
<div class="hl" style="left:16px;top:85px;width:937px"></div>
<div class="vl" style="left:427px;top:60px;height:110px;background:#2f3133"></div>
<span class="t" style="left:441.30px;top:62.30px;transform:scaleX(0.9222);">Variables</span>
<div class="ul" style="left:428px;top:84px;width:73px;height:2px"></div>
<div class="abs" style="left:19px;top:89px;width:323px;height:24px;border:1px solid #646464;border-radius:3px"></div>
<svg class="abs" style="left:26px;top:94px" width="16" height="14" viewBox="0 0 16 14"><path d="M2 6.8l3.8 4.2L14 1.8" stroke="#d3682f" stroke-width="2.2" fill="none"/></svg>
<span class="t" style="left:45.27px;top:92.00px;transform:scaleX(1.0568);">&quot;http-nio-8080-exec-...group &quot;main&quot;: RUNNI...</span>
<svg class="abs" style="left:326px;top:99px" width="10" height="6" viewBox="0 0 10 6"><path d="M0.3 0.3h9L4.8 5.5z" fill="#9da0a3"/></svg>
<svg class="abs" style="left:354px;top:95px" width="12" height="13" viewBox="0 0 12 13"><path d="M6 12.5V1.5M1.5 6L6 1.5l4.5 4.5" stroke="#5c5f61" stroke-width="1.7" fill="none"/></svg>
<svg class="abs" style="left:380px;top:95px" width="12" height="13" viewBox="0 0 12 13"><path d="M6 0.5v11M1.5 7L6 11.5l4.5-4.5" stroke="#afb1b3" stroke-width="1.7" fill="none"/></svg>
<svg class="abs" style="left:405px;top:95px" width="14" height="13" viewBox="0 0 14 13"><path d="M0.5 0.3h13L8.5 6v6.5h-3V6z" fill="#afb1b3"/></svg>
<div class="abs" style="left:16px;top:118px;width:411px;height:21px;background:#4b6eaf"></div>
<div class="abs" style="left:16px;top:139px;width:411px;height:30px;background:#4c483f"></div>
<div class="abs" style="left:0;top:118px;width:427px;height:48px;overflow:hidden">
<span class="t" style="left:31.56px;top:1.00px;transform:scaleX(1.0371);color:#ccd3df;">isAccepted:353, ParametersInterceptor</span>
<span class="t" style="left:261.61px;top:1.00px;transform:scaleX(1.0561);color:#ccd3df;font-style:italic;">(com.opensymphony.xwork2</span>
<span class="t" style="left:31.88px;top:22.00px;transform:scaleX(1.0399);color:#84817a;">acceptableName:337, ParametersInterceptor</span>
<span class="t" style="left:296.32px;top:22.00px;transform:scaleX(1.0358);color:#84817a;font-style:italic;">(com.opensymphony.x</span>
</div>
<div class="abs" style="left:418px;top:118px;width:9px;height:48px;background:rgba(160,165,175,0.28)"></div>
<svg class="abs" style="left:434.5px;top:93.29999999999995px" width="11" height="11" viewBox="0 0 11 11"><path d="M5.5 0v11M0 5.5h11" stroke="#dedede" stroke-width="1.9"/></svg>
<svg class="abs" style="left:435px;top:123.5px" width="10" height="3" viewBox="0 0 10 3"><path d="M0 1.5h10" stroke="#5c5f61" stroke-width="1.6"/></svg>
<svg class="abs" style="left:434px;top:148px" width="13" height="7" viewBox="0 0 13 7"><path d="M0.3 6.5L6.3 0.3l6 6.2z" fill="#55585a"/></svg>
<div class="vl" style="left:452px;top:87px;height:80px;background:#323537"></div>
<svg class="abs" style="left:456px;top:93px" width="9" height="11" viewBox="0 0 9 11"><path d="M0.3 0.6L8.2 5.3L0.3 10z" fill="#a4a4a4"/></svg>
<svg class="abs" style="left:456px;top:114px" width="9" height="11" viewBox="0 0 9 11"><path d="M0.3 0.6L8.2 5.3L0.3 10z" fill="#a4a4a4"/></svg>
<svg class="abs" style="left:456px;top:135px" width="9" height="11" viewBox="0 0 9 11"><path d="M0.3 0.6L8.2 5.3L0.3 10z" fill="#a4a4a4"/></svg>
<svg class="abs" style="left:476px;top:92.39999999999998px" width="11" height="12" viewBox="0 0 11 12"><path d="M0 1.4h10.5M0 5.5h10.5M0 9.6h10.5" stroke="#cc983a" stroke-width="2.7"/></svg>
<svg class="abs" style="left:473.5px;top:112px" width="15" height="15" viewBox="0 0 15 15"><circle cx="7.4" cy="7.2" r="6.9" fill="#c9983e"/><text x="4.6" y="10" font-size="10.5" font-family="Liberation Sans" fill="#43361c">p</text></svg>
<svg class="abs" style="left:472.5px;top:135.5px" width="17" height="9" viewBox="0 0 17 9"><circle cx="4.3" cy="4.8" r="3.1" stroke="#9db0c0" stroke-width="1.6" fill="none"/><circle cx="12.5" cy="4.8" r="3.1" stroke="#9db0c0" stroke-width="1.6" fill="none"/><path d="M7.2 4.2h2.4" stroke="#9db0c0" stroke-width="1.3"/></svg>
<span class="t" style="left:492.20px;top:87.60px;transform:scaleX(1.0411);color:#ea7671;">this</span>
<span class="t" style="left:516.22px;top:87.60px;transform:scaleX(1.2082);">=</span>
<span class="t" style="left:529.81px;top:87.60px;transform:scaleX(1.0304);color:#808080;">{ParametersInterceptor@4385}</span>
<span class="t" style="left:491.60px;top:108.60px;transform:scaleX(1.0710);color:#ea7671;">paramName</span>
<span class="t" style="left:569.76px;top:108.60px;transform:scaleX(1.1429);">=</span>
<span class="t" style="left:582.58px;top:108.60px;transform:scaleX(1.0399);color:#6a9153;">&quot;(&#x27;&quot;</span>
<span class="t" style="left:491.88px;top:129.60px;transform:scaleX(1.0416);color:#ea7671;">acceptedPattern</span>
<span class="t" style="left:590.02px;top:129.60px;transform:scaleX(1.2082);">=</span>
<span class="t" style="left:603.71px;top:129.60px;transform:scaleX(0.9923);color:#808080;">{Pattern@4394}</span>
<span class="t" style="left:696.44px;top:129.60px;transform:scaleX(1.1220);">&quot;[[\p{Graph}\s]&amp;&amp;[^,#:=]]*&quot;</span>
</div>
<svg class="abs" style="left:0;top:0" width="953" height="723" viewBox="0 0 953 723">
<path d="M752.9 323.4L716.4 277.1L691.0 244.9L669.8 218.3L653.6 197.9L568.7 93.0L571.7 90.5L555.2 82.0L560.2 99.8L563.2 97.4L649.1 201.6L665.9 221.5L687.7 247.6L714.2 278.9L752.3 324.0z" fill="#fb3333"/>
<path d="M702.9 499.1L707.2 539.8L712.5 585.5L715.5 613.4L718.6 643.2L720.8 663.5L716.8 664.0L727.0 680.3L732.7 661.9L728.7 662.4L725.6 642.3L720.9 612.7L716.7 585.0L710.0 539.5L703.7 498.9z" fill="#fb3333"/>
</svg>
</body></html>
